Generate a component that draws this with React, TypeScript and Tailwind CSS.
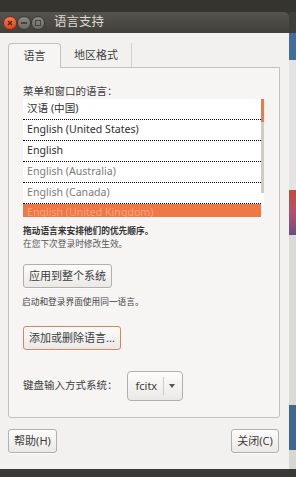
import React from "react";

const cjk = "font-['Noto_Sans','Noto_Sans_CJK_SC',sans-serif]";

function WinButton({ kind }: { kind: "close" | "min" | "max" }) {
  if (kind === "close") {
    return (
      <div className="grid h-[14px] w-[14px] place-items-center rounded-full border border-[#7a2f12] bg-gradient-to-b from-[#f27b4f] to-[#d9481b]">
        <svg width="6" height="6" viewBox="0 0 6 6">
          <path d="M1 1L5 5M5 1L1 5" stroke="#5a230c" strokeWidth="1.3" />
        </svg>
      </div>
    );
  }
  return (
    <div className="grid h-[14px] w-[14px] place-items-center rounded-full border border-[#3a3935] bg-gradient-to-b from-[#8a8984] to-[#6b6a65]">
      {kind === "min" ? (
        <div className="h-[2px] w-[6px] bg-[#45443f]" />
      ) : (
        <div className="h-[6px] w-[6px] border border-[#45443f]" />
      )}
    </div>
  );
}

function Btn({ children, className = "" }: { children: React.ReactNode; className?: string }) {
  return (
    <div
      className={
        "flex h-[24px] items-center justify-center rounded-[3px] border bg-gradient-to-b from-[#fcfcfb] to-[#ebe9e6] px-[5px] text-[11px] text-[#3c3c3c] shadow-[0_1px_0_rgba(255,255,255,0.8)] " +
        className
      }
    >
      {children}
    </div>
  );
}

const rows = [
  { text: "汉语 (中国)", dim: false },
  { text: "English (United States)", dim: false },
  { text: "English", dim: false },
  { text: "English (Australia)", dim: true },
  { text: "English (Canada)", dim: true },
];

export default function App() {
  return (
    <div className={"flex h-[477px] w-[296px] flex-col overflow-hidden bg-[#383733] " + cjk}>
      <div className="h-[12px] shrink-0 bg-[#35342f]" />
      <div className="flex flex-1">
        {/* window */}
        <div className="flex w-[289px] flex-col">
          <div className="flex h-[21px] items-center rounded-tr-[5px] bg-gradient-to-b from-[#56544f] to-[#403f3a] pl-[3px]">
            <WinButton kind="close" />
            <WinButton kind="min" />
            <WinButton kind="max" />
            <span className="ml-[9px] text-[12.5px] leading-none text-[#dfdbd2]">语言支持</span>
          </div>
          <div className="flex h-[436px] flex-col bg-[#f2f1f0] px-[8px] pt-[10px]">
            {/* tabs */}
            <div className="flex h-[24px] items-end">
              <div className="relative z-10 -mb-px flex h-[25px] w-[53px] items-center justify-center rounded-t-[4px] border border-b-0 border-[#c4c2be] bg-[#f6f5f4] text-[11px] text-[#3c3c3c]">
                语言
              </div>
              <div className="flex h-[24px] w-[71px] items-center justify-center border-r border-[#d3d1cd] text-[11px] text-[#3c3c3c]">
                地区格式
              </div>
            </div>
            <div className="flex h-[351px] w-[272px] flex-col rounded-b-[3px] border border-[#c4c2be] bg-[#f6f5f4] pl-[14px]">
              <div className="mt-[17px] text-[10.5px] leading-[13px] text-[#3c3c3c]">菜单和窗口的语言：</div>
              <div className="mt-[1px] flex h-[118px] w-[241px] overflow-hidden bg-white">
                <div className="flex flex-1 flex-col">
                  {rows.map((r) => (
                    <div key={r.text} className="flex h-[21px] shrink-0 flex-col">
                      <div
                        className={
                          "flex h-[20px] shrink-0 items-center pl-[4px] text-[10.6px] " +
                          (r.dim ? "text-[#7d7b78]" : "text-[#2e2e2e]")
                        }
                      >
                        {r.text}
                      </div>
                      <div className="h-px shrink-0 border-t border-dotted border-black" />
                    </div>
                  ))}
                  <div className="flex h-[21px] shrink-0 items-start bg-[#ef7845] pl-[4px] pt-[1px] text-[10.6px] leading-[14px] text-[#f7a27e]">
                    English (United Kingdom)
                  </div>
                </div>
                <div className="flex w-[3px] flex-col">
                  <div className="h-[23px] bg-[#ef7845]" />
                  <div className="h-[71px] bg-[#cfccc8]" />
                  <div className="flex-1" />
                </div>
              </div>
              <div className="mt-[8px] text-[8.7px] font-bold leading-[13px] text-[#333]">拖动语言来安排他们的优先顺序。</div>
              <div className="text-[8.7px] leading-[13px] text-[#555]">在您下次登录时修改生效。</div>
              <Btn className="mt-[13px] w-[89px] border-[#b3b0ab]">应用到整个系统</Btn>
              <div className="mt-[8px] -ml-[1px] text-[8.7px] leading-[13px] text-[#444]">启动和登录界面使用同一语言。</div>
              <Btn className="mt-[17px] w-[98px] border-[#e0825c]">添加或删除语言...</Btn>
              <div className="mt-[21px] flex items-center">
                <span className="text-[10.5px] text-[#3c3c3c]">键盘输入方式系统：</span>
                <div className="ml-[9px] flex h-[30px] w-[56px] items-center rounded-[4px] border border-[#b3b0ab] bg-gradient-to-b from-[#fcfcfb] to-[#ebe9e6]">
                  <span className="ml-[8px] text-[11px] text-[#3c3c3c]">fcitx</span>
                  <div className="ml-[6px] h-[18px] w-px bg-[#cfccc8]" />
                  <svg className="ml-[5px]" width="6" height="4" viewBox="0 0 6 4">
                    <path d="M0 0H6L3 4Z" fill="#555" />
                  </svg>
                </div>
              </div>
            </div>
            <div className="mt-[11px] flex justify-between pr-[2px]">
              <Btn className="w-[49px] border-[#b3b0ab]">帮助(H)</Btn>
              <Btn className="w-[48px] border-[#b3b0ab]">关闭(C)</Btn>
            </div>
          </div>
        </div>
        {/* desktop strip */}
        <div className="flex flex-1 flex-col bg-[#cfcecb]">
          <div className="h-[21px] bg-[#3e3d39]" />
          <div className="h-[27px] bg-[#3f6e9f]" />
          <div className="h-[130px] bg-[#e4e3e1]" />
          <div className="h-[45px] bg-gradient-to-b from-[#c8483a] via-[#b3506a] to-[#6a4a8a]" />
          <div className="h-[170px] bg-[#dcdad7]" />
          <div className="h-[45px] bg-[#3d6991]" />
          <div className="flex-1 bg-[#d8d6d3]" />
        </div>
      </div>
      <div className="h-[8px] shrink-0 bg-[#3a3935]" />
    </div>
  );
}
